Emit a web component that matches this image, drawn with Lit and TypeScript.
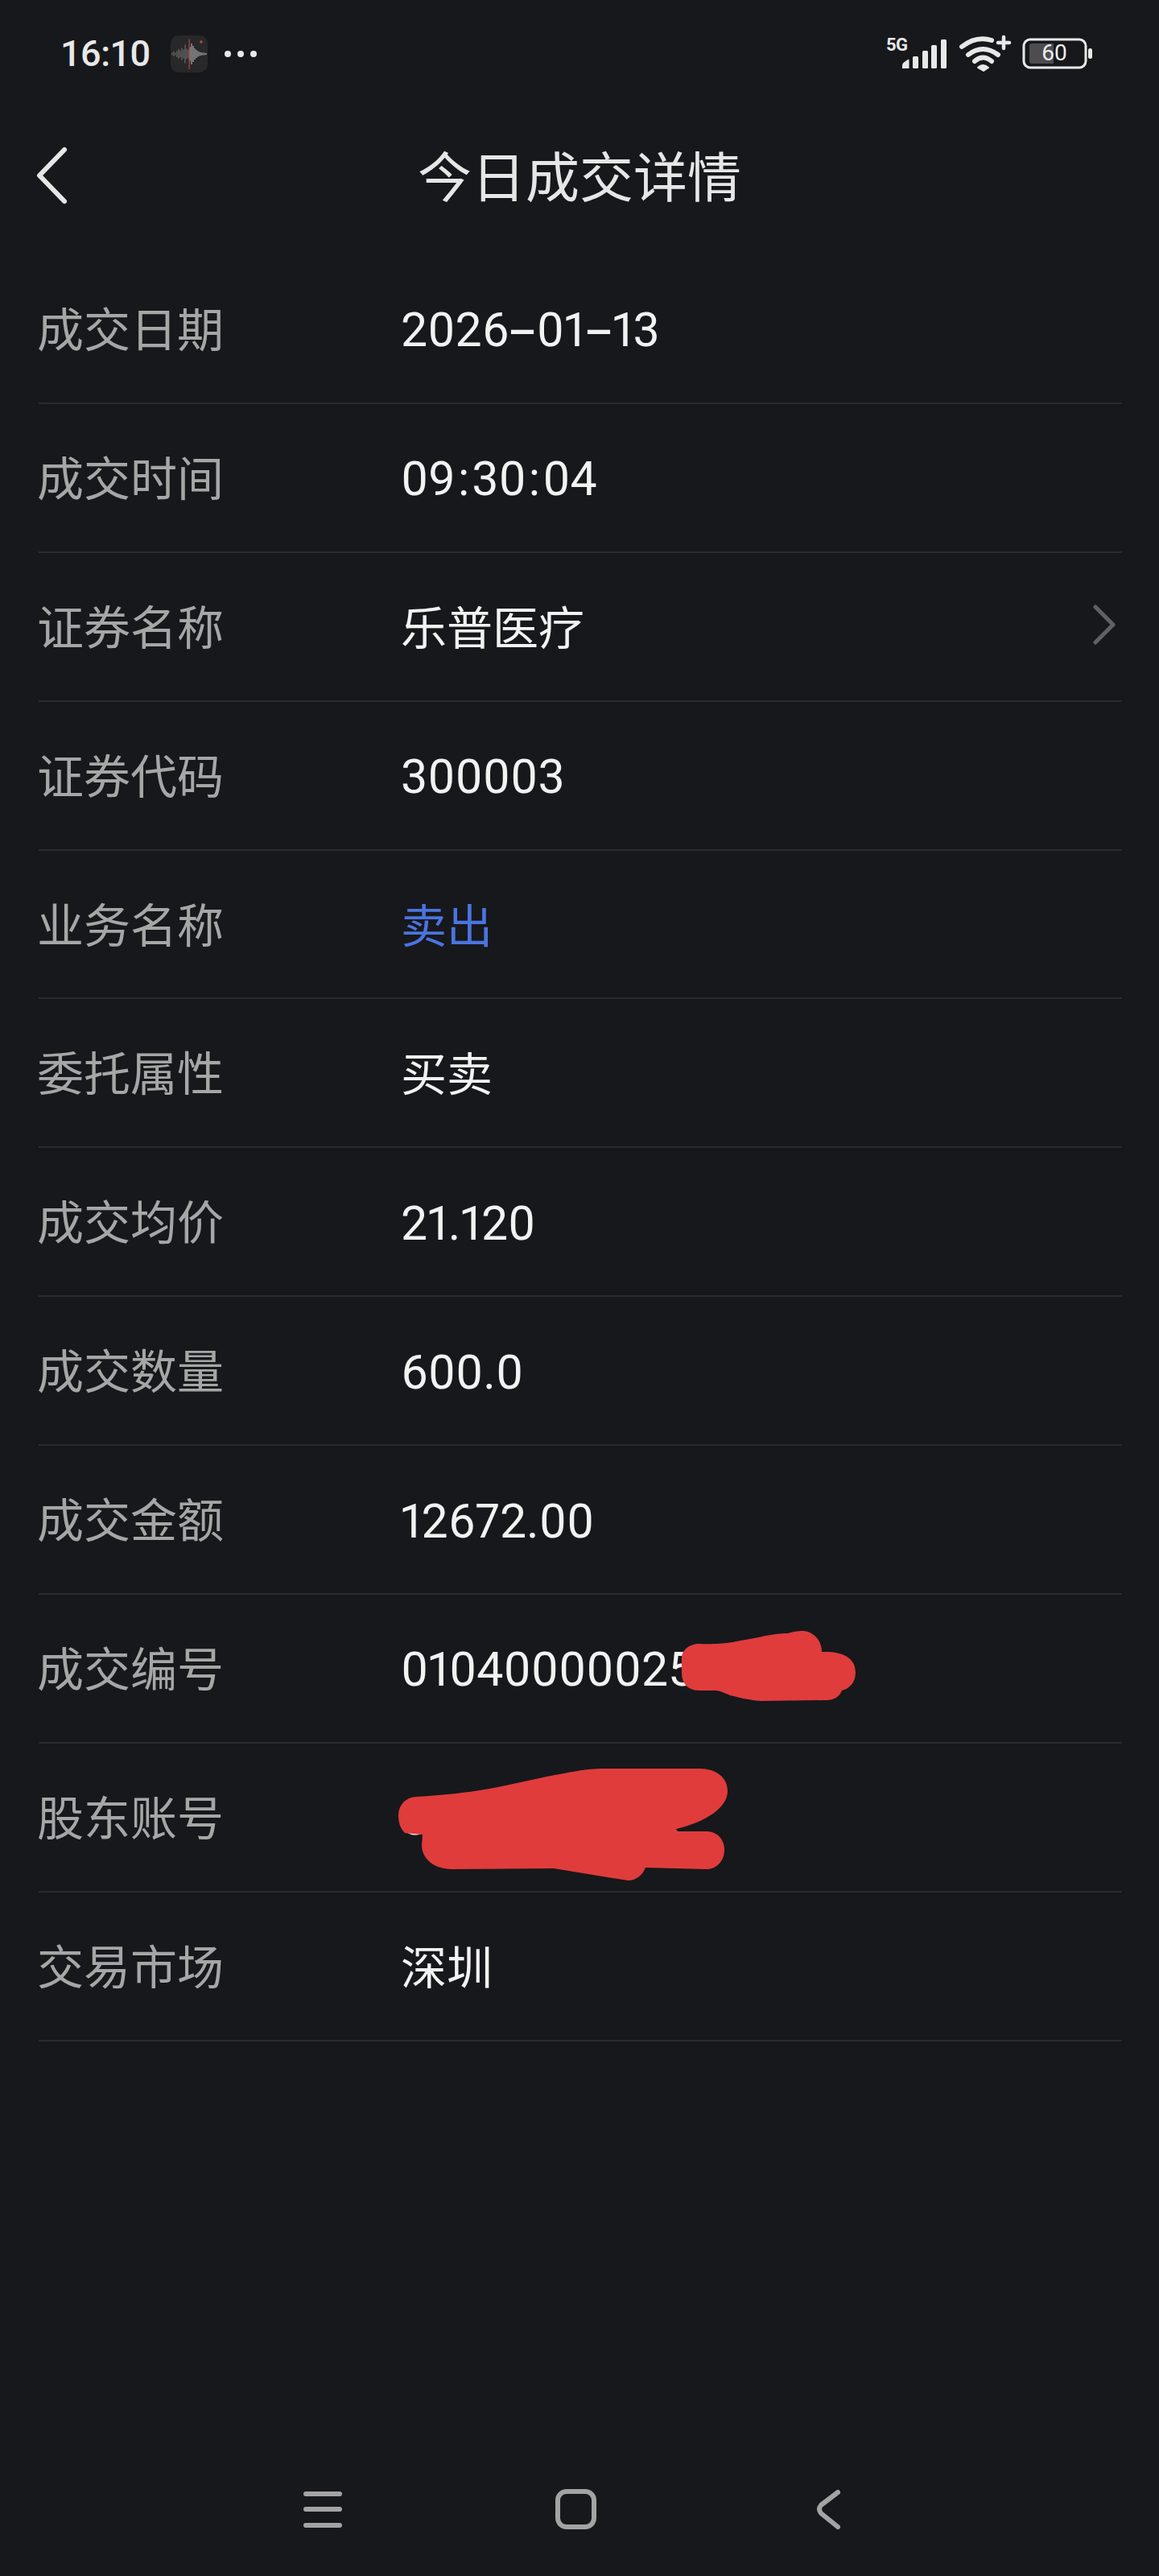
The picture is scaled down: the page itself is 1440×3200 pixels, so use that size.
import { LitElement, html, css, svg } from "lit";
import { customElement } from "lit/decorators.js";

const ROWS: { label: string; value: string; kind?: string; cjk?: boolean }[] = [
  { label: "成交日期", value: "2026-01-13" },
  { label: "成交时间", value: "09:30:04" },
  { label: "证券名称", value: "乐普医疗", kind: "link", cjk: true },
  { label: "证券代码", value: "300003" },
  { label: "业务名称", value: "卖出", kind: "sell", cjk: true },
  { label: "委托属性", value: "买卖", cjk: true },
  { label: "成交均价", value: "21.120" },
  { label: "成交数量", value: "600.0" },
  { label: "成交金额", value: "12672.00" },
  { label: "成交编号", value: "01040000025", kind: "red1" },
  { label: "股东账号", value: "", kind: "red2" },
  { label: "交易市场", value: "深圳", cjk: true },
];

const WAVE = [3, 6, 3, 8, 12, 8, 15, 11, 23, 13, 10, 17, 26, 20, 14, 10, 7, 5, 4, 3, 3, 2];

@customElement("app-root")
export class AppRoot extends LitElement {
  static styles = css`
    :host {
      display: block;
      width: 1440px;
      height: 3200px;
      background: #17181b;
      font-family: Roboto, "Noto Sans CJK SC", sans-serif;
      overflow: hidden;
    }
    .page {
      display: flex;
      flex-direction: column;
      height: 3200px;
    }
    .status {
      height: 134px;
      flex: none;
      display: flex;
      justify-content: space-between;
      align-items: flex-start;
      box-sizing: border-box;
      padding: 44px 0 0 75px;
    }
    .status-left {
      display: flex;
      align-items: center;
      height: 46px;
    }
    .time {
      font-size: 45px;
      line-height: 46px;
      font-weight: 500;
      color: #e8e8e8;
      width: 137px;
      letter-spacing: -0.5px;
    }
    .rec {
      display: block;
      width: 46px;
      height: 46px;
    }
    .dots {
      display: block;
      width: 44px;
      height: 10px;
      margin-left: 21px;
    }
    .status-right {
      display: block;
      width: 340px;
      height: 70px;
      margin-top: -4px;
    }
    .nav {
      height: 183px;
      flex: none;
      position: relative;
      display: flex;
      align-items: flex-start;
      justify-content: center;
    }
    .back {
      position: absolute;
      left: 40px;
      top: 46px;
      width: 50px;
      height: 76px;
    }
    .title {
      font-family: "Noto Sans CJK SC", sans-serif;
      font-size: 67px;
      line-height: 100px;
      font-weight: 400;
      color: #e6e6e6;
      margin-top: 32px;
    }
    .list {
      flex: none;
      margin: 0 46px 0 48px;
    }
    .row {
      position: relative;
      height: 184.9px;
      box-sizing: border-box;
      border-bottom: 2px solid #2a2b2e;
      display: flex;
      align-items: center;
      padding-bottom: 5px;
    }
    .label {
      width: 452px;
      flex: none;
      margin-left: -2px;
      font-family: "Noto Sans CJK SC", sans-serif;
      font-size: 58px;
      font-weight: 400;
      color: #a6a6a6;
    }
    .value {
      font-size: 59px;
      font-weight: 400;
      color: #f2f2f2;
      flex: 1;
      padding-top: 8px;
      font-variant-numeric: proportional-nums;
    }
    .value.cjk {
      font-family: "Noto Sans CJK SC", sans-serif;
      font-size: 57px;
      padding-top: 0;
    }
    .dash {
      display: inline-block;
      transform: scale(2, 1.2);
      margin: 0 9px;
    }
    .colon {
      display: inline-block;
      margin: 0 3px;
    }
    .sell {
      color: #4a74e0;
    }
    .chev {
      display: block;
      width: 30px;
      height: 52px;
      margin-right: 6px;
    }
    .redact {
      position: absolute;
      display: block;
    }
    .redact.a {
      left: 798px;
      top: 43px;
      width: 220px;
      height: 92px;
    }
    .redact.b {
      left: 444px;
      top: 27px;
      width: 416px;
      height: 144px;
    }
    .softbar {
      margin-top: auto;
      flex: none;
    }
    .softbar svg {
      display: block;
      width: 1440px;
      height: 140px;
    }
  `;

  private statusRight() {
    return html`<svg class="status-right" viewBox="1100 40 340 70" aria-hidden="true">
      <text x="1101" y="63" font-family="Roboto" font-weight="700" font-size="22" fill="#e8e8e8" letter-spacing="-0.5">5G</text>
      <g fill="#e8e8e8">
        <path d="M1121 85 v-4 q0 -2 2 -3.500 l5 -3.500 q1.500 -1 1.500 1 v10 z" />
        <rect x="1134" y="70" width="7" height="15" rx="1.500" />
        <rect x="1146" y="63" width="7" height="22" rx="1.500" />
        <rect x="1157" y="56" width="7" height="29" rx="1.500" />
        <rect x="1169" y="49" width="7" height="36" rx="1.500" />
      </g>
      <g fill="none" stroke="#e8e8e8" stroke-width="6" stroke-linecap="round">
        <path d="M1195 58 Q1213 44 1232 50" />
        <path d="M1203 68 Q1221 54 1240 68" />
        <path d="M1211 76 Q1221 67 1232 76" />
      </g>
      <path d="M1215 84 Q1221 78 1228 84 L1222 88 Z" fill="#e8e8e8" stroke="#e8e8e8" stroke-width="2" stroke-linejoin="round" />
      <path d="M1247 46 v14 M1240 53 h14" stroke="#e8e8e8" stroke-width="4.500" stroke-linecap="round" fill="none" />
      <rect x="1272" y="49" width="77" height="35" rx="8" fill="none" stroke="#e8e8e8" stroke-width="3" />
      <path d="M1282 54 H1309 V79 H1282 Q1279 79 1279 76 V57 Q1279 54 1282 54 Z" fill="#4d4d4f" />
      <text x="1310" y="75" text-anchor="middle" font-family="Roboto" font-weight="400" font-size="28" fill="#eeeeee">60</text>
      <rect x="1352" y="60" width="5" height="13" rx="2.500" fill="#e8e8e8" />
    </svg>`;
  }

  private rec() {
    return html`<svg class="rec" viewBox="0 0 46 46" aria-hidden="true">
      <rect width="46" height="46" rx="10" fill="#28282a" />
      ${WAVE.map((h, i) => {
        const x = 2 + i * 2;
        const color = i < 11 ? "#8a8a8a" : "#e8e8e8";
        return svg`<line x1=${x} x2=${x} y1=${23 - h / 2} y2=${23 + h / 2} stroke=${color} stroke-width="0.800" />`;
      })}
      <rect x="22.500" y="5" width="1.200" height="37" fill="#b5483e" />
      <circle cx="38" cy="8" r="1.800" fill="#b5483e" />
    </svg>`;
  }

  private redact(kind?: string) {
    if (kind === "red1") {
      return html`<svg class="redact a" viewBox="846 2024 220 92" aria-hidden="true">
        <path
          fill="#e03c3c"
          d="M869 2042 C885 2043 903 2042 920 2038 C945 2034 960 2029 979 2029 C985 2027 990 2026 998 2026 C1012 2027 1021 2039 1021 2052 C1045 2051 1063 2058 1063 2078 C1063 2090 1055 2098 1046 2100 C1043 2108 1036 2112 1027 2112 L945 2113 C930 2112 915 2108 907 2106 C898 2102 893 2100 888 2100 L869 2100 C855 2100 847 2092 847 2078 L847 2060 C847 2050 856 2042 869 2042 Z"
        />
      </svg>`;
    }
    if (kind === "red2") {
      return html`<svg class="redact b" viewBox="492 2193 416 144" aria-hidden="true">
        <path d="M505 2276 Q514 2282 523 2278 L520 2274 Z" fill="#f2f2f2" />
        <path
          fill="#e03c3c"
          d="M518 2232 C550 2230 580 2227 608 2222 C640 2216 670 2208 701 2203 C720 2199 735 2197 751 2197 L869 2197 C890 2197 904 2208 904 2225 C904 2245 878 2263 840 2272 L842 2275 L878 2275 C892 2275 900 2286 900 2298 C900 2312 890 2322 878 2322 L802 2320 C798 2330 790 2336 780 2336 L688 2321 L562 2322 C538 2322 524 2308 524 2292 L525 2279 L503 2277 C498 2272 495 2265 495 2255 C495 2242 505 2232 518 2232 Z"
        />
      </svg>`;
    }
    return "";
  }

  private valueParts(v: string) {
    return v.split(/([-:])/).map((p) =>
      p === "-"
        ? html`<span class="dash">-</span>`
        : p === ":"
          ? html`<span class="colon">:</span>`
          : p
    );
  }

  render() {
    return html`<div class="page">
      <div class="status">
        <div class="status-left">
          <span class="time">16:10</span>
          ${this.rec()}
          <svg class="dots" viewBox="0 0 44 10" aria-hidden="true">
            <circle cx="4" cy="5" r="4" fill="#e8e8e8" />
            <circle cx="20" cy="5" r="4" fill="#e8e8e8" />
            <circle cx="36" cy="5" r="4" fill="#e8e8e8" />
          </svg>
        </div>
        ${this.statusRight()}
      </div>
      <div class="nav">
        <svg class="back" viewBox="0 0 50 76" aria-hidden="true">
          <path d="M40 6 L9 38 L40 70" fill="none" stroke="#e6e6e6" stroke-width="6" stroke-linecap="round" stroke-linejoin="round" />
        </svg>
        <div class="title">今日成交详情</div>
      </div>
      <div class="list">
        ${ROWS.map(
          (r) => html`<div class="row">
            <div class="label">${r.label}</div>
            <div class="value ${r.kind === "sell" ? "sell" : ""} ${r.cjk ? "cjk" : ""}">${this.valueParts(r.value)}</div>
            ${r.kind === "link"
              ? html`<svg class="chev" viewBox="0 0 30 52" aria-hidden="true">
                  <path d="M3 4 L25 26 L3 48" fill="none" stroke="#5f6168" stroke-width="5" stroke-linecap="round" stroke-linejoin="round" />
                </svg>`
              : ""}
            ${this.redact(r.kind)}
          </div>`
        )}
      </div>
      <div class="softbar">
        <svg viewBox="0 3060 1440 140" aria-hidden="true">
          <g fill="none" stroke="#a3a3a3" stroke-width="6" stroke-linecap="round" stroke-linejoin="round">
            <path d="M380 3098 H422 M380 3117 H422 M380 3137 H422" />
            <rect x="693" y="3095" width="45" height="44" rx="11" />
            <path d="M1041 3096 L1020 3112 Q1016 3117 1020 3122 L1041 3139" />
          </g>
        </svg>
      </div>
    </div>`;
  }
}
